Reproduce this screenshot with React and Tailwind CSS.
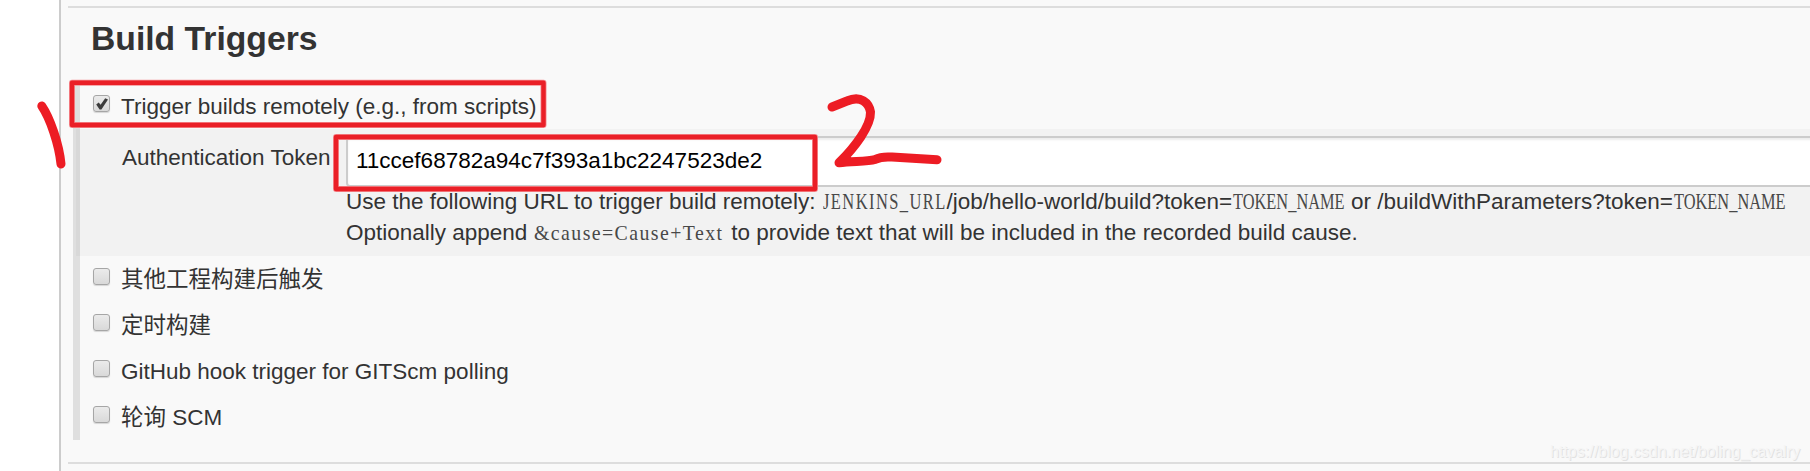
const rows = [
  { label: '其他工程构建后触发' },
  { label: '定时构建' },
  { label: 'GitHub hook trigger for GITScm polling' },
  { label: '轮询 SCM' },
];

function Checkbox({ checked }) {
  return (
    <span
      role="checkbox"
      aria-checked={!!checked}
      className="flex h-[17px] w-[17px] shrink-0 items-center justify-center rounded-[3px] border-[1.5px] border-[#a6a6a6] bg-linear-to-b from-[#ebebeb] to-[#d9d9d9] shadow-[0_1px_1px_#00000024]"
    >
      {checked && (
        <svg viewBox="0 0 14 14" className="h-[14px] w-[14px] shrink-0">
          <path d="M1.2 7.6 L3.7 5.6 L5.6 7.8 L10.2 1.2 L13 2.6 L6.4 12.4 L4.6 12.4 Z" fill="#3c3c3c" />
        </svg>
      )}
    </span>
  );
}

function Row({ label, checked }) {
  return (
    <label className="flex h-[46px] items-start pl-[13px]">
      <span className="pt-[12px]">
        <Checkbox checked={checked} />
      </span>
      <span className="pt-[8px] pl-[11px] leading-[32px] whitespace-nowrap">{label}</span>
    </label>
  );
}

function TokenName() {
  return (
    <code className="inline-block w-[112.5px] font-['Liberation_Serif',serif] text-[23px] text-[#484848]">
      <span className="inline-block origin-left translate-x-px scale-x-[0.712]">TOKEN_NAME</span>
    </code>
  );
}

export default function App() {
  return (
    <div className="relative flex h-[471px] w-[1810px] overflow-hidden bg-white font-['Liberation_Sans','Noto_Sans_CJK_SC',sans-serif] text-[22.5px] text-[#333]">
      <div className="w-[59px] shrink-0" />
      <main className="flex min-w-0 flex-1 flex-col border-l-2 border-[#ccc] bg-[#f9f9f9] pt-[6px] pl-[7px]">
        <div className="h-[2px] shrink-0 bg-[#ddd]" />
        <h1 className="h-[75px] shrink-0 pt-[10px] pl-[23px] text-[33.7px] leading-[40px] font-bold whitespace-nowrap">
          Build Triggers
        </h1>
        <section className="ml-[5px] flex h-[357px] shrink-0 flex-col border-l-[7px] border-[#dfdfdf]">
          <Row label="Trigger builds remotely (e.g., from scripts)" checked />
          <div className="-ml-[4px] flex h-[127px] shrink-0 border-l-4 border-[#d8d8d8] bg-[#f2f2f2]">
            <span className="w-[266px] shrink-0 pt-[13px] pl-[42px] leading-[32px] whitespace-nowrap">
              Authentication Token
            </span>
            <div className="min-w-0 flex-1 pt-[7px]">
              <div className="-mr-[8px] flex h-[51px] items-center rounded-[4px] border-2 border-[#ccc] bg-white pb-[2px] pl-[8px] text-black shadow-[inset_0_2px_2px_#00000013]">
                11ccef68782a94c7f393a1bc2247523de2
              </div>
              <div className="-mt-px flex h-[31px] items-baseline leading-[31px] whitespace-pre">
                <span>Use the following URL to trigger build remotely: </span>
                <code className="ml-[1px] inline-block w-[123.75px] font-['Liberation_Serif',serif] text-[23px] text-[#484848]">
                  <span className="inline-block origin-left scale-x-[0.716] tracking-[2px]">JENKINS_URL</span>
                </code>
                <span>/job/hello-world/build?token=</span>
                <TokenName />
                <span> or /buildWithParameters?token=</span>
                <TokenName />
              </div>
              <div className="flex h-[31px] items-baseline leading-[31px] whitespace-pre">
                <span>Optionally append </span>
                <code className="inline-block w-[191.25px] font-['Liberation_Serif',serif] text-[22px] text-[#484848]">
                  <span className="inline-block origin-left scale-x-90 tracking-[1.6px]">&amp;cause=Cause+Text</span>
                </code>
                <span> to provide text that will be included in the recorded build cause.</span>
              </div>
            </div>
          </div>
          {rows.map((row) => (
            <Row key={row.label} label={row.label} />
          ))}
        </section>
        <div className="mt-[22px] h-[2px] shrink-0 bg-[#ddd]" />
      </main>

      <svg className="pointer-events-none absolute inset-0 h-full w-full" viewBox="0 0 1810 471" fill="none" strokeLinejoin="round" strokeLinecap="round">
        <g stroke="#f58f93" strokeWidth="6">
          <rect x="72" y="82.7" width="471.5" height="42.3" />
          <rect x="336" y="137" width="479" height="52" />
        </g>
        <g stroke="#ea1f27" strokeWidth="4.4">
          <rect x="72" y="82.7" width="471.5" height="42.3" />
          <rect x="336" y="137" width="479" height="52" />
        </g>
        <g stroke="#ed1c24" strokeWidth="9">
          <path d="M41.8 106 C50 118 59 144 61 164" />
          <path d="M832 107 L847 101 C861 95 869 103 870.5 112 C871 126 855 147 839 162.8 C852 161 867 161.8 875 159.5 C882 156 888 157 892 157 L937 159.8" />
        </g>
      </svg>
      <span className="absolute right-[10px] bottom-[9px] text-[16px] leading-[20px] whitespace-nowrap text-[#f5f5f5] [text-shadow:1px_1px_0_#e2e2e2]">
        https://blog.csdn.net/boling_cavalry
      </span>
    </div>
  );
}
